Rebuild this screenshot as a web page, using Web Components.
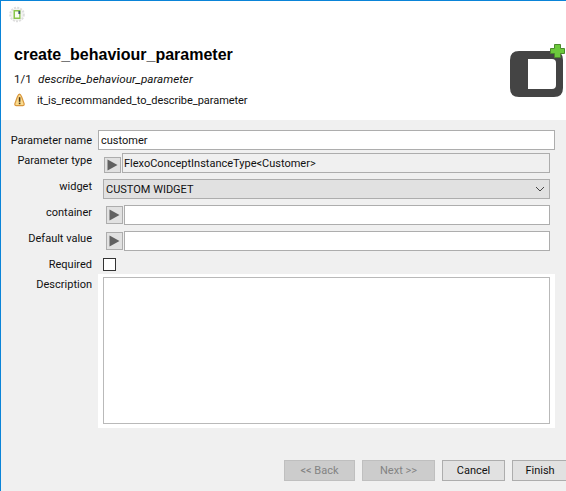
<!DOCTYPE html>
<html>
<head>
<meta charset="utf-8">
<title>create_behaviour_parameter</title>
<style>
  html, body { margin: 0; height: 100%; overflow: hidden; }
  body { font: 11px Roboto, 'Liberation Sans', Arial, sans-serif; color: #111; }
</style>
</head>
<body>
<wizard-dialog>
  <wizard-header slot="header"></wizard-header>
  <param-form>
    <form-row label="Parameter name" top="3" style="--field-pad:0">
      <text-field value="customer"></text-field>
    </form-row>
    <form-row label="Parameter type" gap="3">
      <binding-field value="FlexoConceptInstanceType<Customer>" readonly></binding-field>
    </form-row>
    <form-row label="widget" gap="6">
      <combo-field value="CUSTOM WIDGET"></combo-field>
    </form-row>
    <form-row label="container" gap="6">
      <binding-field wide></binding-field>
    </form-row>
    <form-row label="Default value" gap="6">
      <binding-field wide></binding-field>
    </form-row>
    <form-row label="Required" gap="7" top="-1">
      <check-field></check-field>
    </form-row>
    <form-row label="Description" gap="3" top="3">
      <area-field></area-field>
    </form-row>
  </param-form>
  <wizard-footer>
    <wizard-button disabled style="width:71px">&lt;&lt; Back</wizard-button>
    <wizard-button disabled style="width:73px">Next &gt;&gt;</wizard-button>
    <wizard-button style="width:63px">Cancel</wizard-button>
    <wizard-button style="width:56px">Finish</wizard-button>
  </wizard-footer>
</wizard-dialog>

<script>
class WizardDialog extends HTMLElement {
  constructor() {
    super();
    this.attachShadow({ mode: 'open' });
    this.shadowRoot.innerHTML = `
      <style>
        :host {
          display: flex;
          flex-direction: column;
          height: 491px;
          box-sizing: border-box;
          border-top: 1px solid #0a84d8;
          border-left: 1px solid #0a84d8;
          background: #f0f0f0;
          overflow: hidden;
        }
      </style>
      <slot name="header"></slot>
      <slot></slot>
    `;
  }
}

class WizardHeader extends HTMLElement {
  constructor() {
    super();
    this.attachShadow({ mode: 'open' });
    this.shadowRoot.innerHTML = `
      <style>
        :host {
          display: block;
          position: relative;
          height: 119px;
          background: #fff;
          padding-left: 13px;
          box-sizing: border-box;
        }
        .gear { display: block; position: absolute; left: 8px; top: 5px; }
        h1 {
          margin: 0;
          padding-top: 44px;
          font: bold 16px/20px 'Liberation Sans', Arial, sans-serif;
          color: #000;
        }
        .step { display: flex; margin-top: 7px; line-height: 14px; height: 14px; }
        .step span { width: 24px; font-size: 11.5px; }
        .step em { font-style: italic; font-size: 11.7px; }
        .warn { display: flex; align-items: center; margin-top: 7px; height: 14px; }
        .warn svg { margin-right: 12px; flex: none; }
        .warn span { letter-spacing: -0.05px; }
        .logo { position: absolute; left: 509px; top: 43px; }
      </style>
      <svg class="gear" width="18" height="18" viewBox="0 0 18 18">
        <circle cx="8" cy="8.5" r="6.8" fill="#f4f4f2" stroke="#dedede" stroke-width="2" stroke-dasharray="2 1.2"/>
        <rect x="4.5" y="4" width="7" height="9" fill="#8ac64a"/>
        <rect x="6" y="5.5" width="4.2" height="6" fill="#fbfdf6"/>
        <rect x="9.4" y="5" width="1.8" height="3" fill="#3b5a68"/>
      </svg>
      <h1>create_behaviour_parameter</h1>
      <div class="step"><span>1/1</span><em>describe_behaviour_parameter</em></div>
      <div class="warn">
        <svg width="11" height="14" viewBox="0 0 11 14">
          <path d="M5.5 1.2 C6.6 1.2 7 2.4 7.6 3.8 L10 10.4 C10.5 12 9.8 12.6 8.6 12.6 H2.4 C1.2 12.6 .5 12 1 10.4 L3.4 3.8 C4 2.4 4.4 1.2 5.5 1.2Z" fill="#fbdc8e" stroke="#d9963c" stroke-width="1.2"/>
          <rect x="4.8" y="4.2" width="1.6" height="4.6" fill="#4a3418"/>
          <rect x="4.8" y="9.6" width="1.6" height="1.6" fill="#4a3418"/>
        </svg>
        <span>it_is_recommanded_to_describe_parameter</span>
      </div>
      <svg class="logo" width="56" height="54" viewBox="0 0 56 54">
        <path fill-rule="evenodd" fill="#444" d="M9 7 H44 Q53 7 53 16 V44 Q53 53 44 53 H9 Q0 53 0 44 V16 Q0 7 9 7Z M18 15 V45 H42 Q46 45 46 41 V19 Q46 15 42 15Z"/>
        <path d="M44.5 0.5 H50.5 V4.5 H54.5 V9.5 H50.5 V13.5 H44.5 V9.5 H40.5 V4.5 H44.5Z" fill="#6cc83c" stroke="#4c8a2c"/>
      </svg>
    `;
  }
}

class ParamForm extends HTMLElement {
  constructor() {
    super();
    this.attachShadow({ mode: 'open' });
    this.shadowRoot.innerHTML = `
      <style>
        :host { display: flex; flex-direction: column; padding-top: 10px; }
      </style>
      <slot></slot>
    `;
  }
}

class FormRow extends HTMLElement {
  constructor() {
    super();
    this.attachShadow({ mode: 'open' });
    const gap = this.getAttribute('gap') || 0;
    const top = this.getAttribute('top') || 0;
    this.shadowRoot.innerHTML = `
      <style>
        :host {
          display: grid;
          grid-template-columns: 91px 457px;
          column-gap: 6px;
          margin-top: ${gap}px;
          align-items: start;
        }
        label {
          text-align: right;
          height: 14px;
          line-height: 16px;
          margin-top: ${top}px;
          white-space: nowrap;
        }
        .cell { display: flex; padding: 0 var(--field-pad, 5px); }
        ::slotted(*) { flex: 1; min-width: 0; }
      </style>
      <label>${this.getAttribute('label')}</label>
      <div class="cell"><slot></slot></div>
    `;
  }
}

// plain bordered box shared by the field elements
const fieldBox = `
  box-sizing: border-box;
  height: 20px;
  border: 1px solid #adadad;
  padding: 0 2px;
  line-height: 20px;
  white-space: nowrap;
`;

class TextField extends HTMLElement {
  constructor() {
    super();
    this.attachShadow({ mode: 'open' });
    this.shadowRoot.innerHTML = `
      <style>
        :host { display: block; ${fieldBox} background: #fff; }
      </style>
      ${this.getAttribute('value') || ''}
    `;
  }
}

class BindingField extends HTMLElement {
  constructor() {
    super();
    this.attachShadow({ mode: 'open' });
    const wide = this.hasAttribute('wide');
    const field = document.createElement('div');
    field.className = 'box' + (this.hasAttribute('readonly') ? ' ro' : '');
    field.textContent = this.getAttribute('value') || '';
    this.shadowRoot.innerHTML = `
      <style>
        :host { display: flex; align-items: flex-start; padding-left: ${wide ? 4 : 2}px; }
        .run {
          flex: none;
          box-sizing: border-box;
          width: 17px;
          height: ${wide ? 18 : 16}px;
          margin: ${wide ? 1 : 4}px 1px 0 -1px;
          display: flex;
          align-items: center;
          justify-content: center;
          background: #e1e1e1;
          border: 1px solid #adadad;
        }
        .box { flex: 1; ${fieldBox} background: #fff; }
        .box.ro { background: #f0f0f0; padding-left: 1px; }
      </style>
      <div class="run">
        <svg width="11" height="12" viewBox="0 0 11 12"><path d="M0.5 0.5 L10.5 6 L0.5 11.5Z" fill="#616161"/></svg>
      </div>
    `;
    this.shadowRoot.append(field);
  }
}

class ComboField extends HTMLElement {
  constructor() {
    super();
    this.attachShadow({ mode: 'open' });
    this.shadowRoot.innerHTML = `
      <style>
        :host {
          display: flex;
          justify-content: space-between;
          align-items: flex-start;
          ${fieldBox}
          background: #e1e1e1;
        }
        svg { margin: 6px 2px 0 0; }
      </style>
      <span>${this.getAttribute('value')}</span>
      <svg width="10" height="6" viewBox="0 0 10 6"><path d="M1 1 L5 5 L9 1" fill="none" stroke="#444" stroke-width="1"/></svg>
    `;
  }
}

class CheckField extends HTMLElement {
  constructor() {
    super();
    this.attachShadow({ mode: 'open' });
    this.shadowRoot.innerHTML = `
      <style>
        :host { display: block; height: 13px; }
        div { box-sizing: border-box; width: 13px; height: 13px; background: #fff; border: 1px solid #333; }
      </style>
      <div></div>
    `;
  }
}

class AreaField extends HTMLElement {
  constructor() {
    super();
    this.attachShadow({ mode: 'open' });
    this.shadowRoot.innerHTML = `
      <style>
        :host {
          display: block;
          margin: 0 -5px;
          padding: 3px 5px 4px;
          background: #fff;
        }
        div { box-sizing: border-box; height: 147px; border: 1px solid #b9b9b9; background: #fff; }
      </style>
      <div></div>
    `;
  }
}

class WizardFooter extends HTMLElement {
  constructor() {
    super();
    this.attachShadow({ mode: 'open' });
    this.shadowRoot.innerHTML = `
      <style>
        :host {
          display: flex;
          gap: 7px;
          margin-top: auto;
          padding: 0 0 10px 283px;
        }
      </style>
      <slot></slot>
    `;
  }
}

class WizardButton extends HTMLElement {
  constructor() {
    super();
    this.attachShadow({ mode: 'open' });
    this.shadowRoot.innerHTML = `
      <style>
        :host {
          display: block;
          flex: none;
          box-sizing: border-box;
          height: 21px;
          line-height: 19px;
          text-align: center;
          background: #e1e1e1;
          border: 1px solid #adadad;
        }
        :host([disabled]) { background: #cccccc; border-color: #bfbfbf; color: #838383; }
      </style>
      <slot></slot>
    `;
  }
}

customElements.define('wizard-dialog', WizardDialog);
customElements.define('wizard-header', WizardHeader);
customElements.define('param-form', ParamForm);
customElements.define('form-row', FormRow);
customElements.define('text-field', TextField);
customElements.define('binding-field', BindingField);
customElements.define('combo-field', ComboField);
customElements.define('check-field', CheckField);
customElements.define('area-field', AreaField);
customElements.define('wizard-footer', WizardFooter);
customElements.define('wizard-button', WizardButton);
</script>
</body>
</html>
